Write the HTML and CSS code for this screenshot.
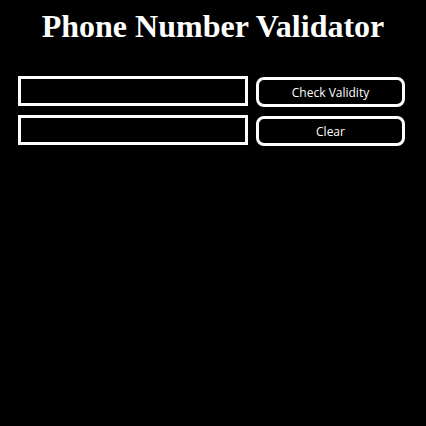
FILE: index.html
```html
<!DOCTYPE html>
<html>
<head>
<meta charset="utf-8">
<link rel="stylesheet" href="styles.css">
</head>
<body>
<h1 class="title">Phone Number Validator</h1>
<div class="form">
  <input class="field" type="text">
  <button class="btn">Check Validity</button>
  <input class="field" type="text">
  <button class="btn">Clear</button>
</div>
</body>
</html>
```
FILE: styles.css
```css
html, body {
  margin: 0;
  padding: 0;
  background: #000;
  color: #fff;
}
body {
  width: 426px;
  height: 426px;
}
.title {
  margin: 0;
  padding-top: 8px;
  text-align: center;
  font-family: "Liberation Serif", serif;
  font-weight: bold;
  font-size: 32px;
  line-height: 36px;
}
.form {
  display: grid;
  grid-template-columns: 230px 149px;
  column-gap: 8px;
  row-gap: 8px;
  margin: 32px 0 0 18px;
}
.field {
  box-sizing: border-box;
  height: 30px;
  margin: 0;
  background: #000;
  border: 3px solid #fff;
  border-radius: 0;
  outline: none;
}
.btn {
  box-sizing: border-box;
  height: 30px;
  margin: 1px 0 0 0;
  background: #000;
  color: #fff;
  border: 3px solid #fff;
  border-radius: 8px;
  font-family: "Open Sans", sans-serif;
  font-size: 12px;
  padding: 0;
}
```
